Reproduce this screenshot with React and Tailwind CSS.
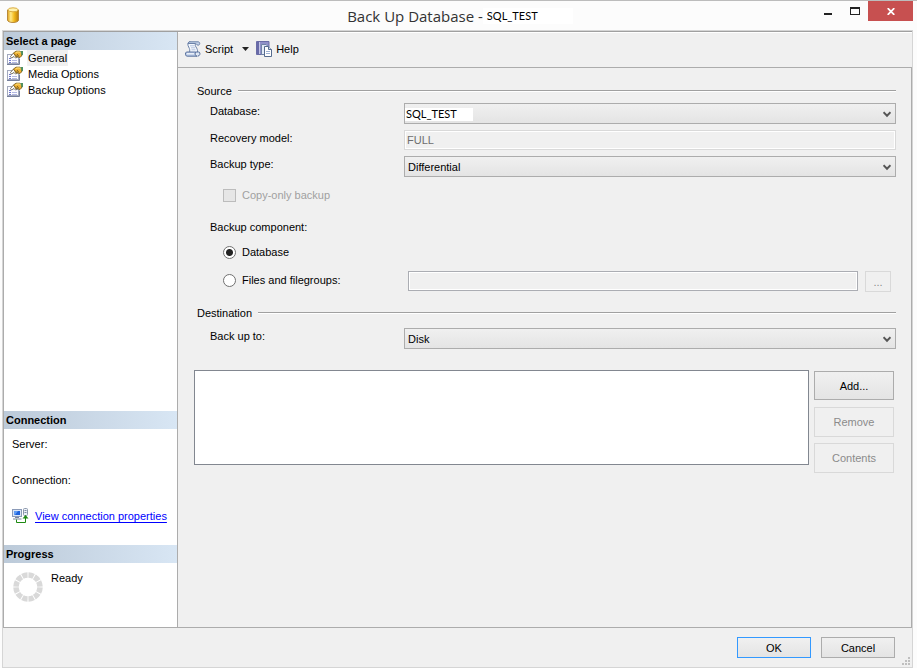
import React, { useState } from "react";

const DatabaseIcon = () => (
  <svg width="12" height="16" viewBox="0 0 12 16" aria-hidden="true">
    <defs>
      <linearGradient id="gold" x1="0" x2="1" y1="0" y2="0">
        <stop offset="0" stopColor="#e0a21c" />
        <stop offset="0.3" stopColor="#ffe98a" />
        <stop offset="0.6" stopColor="#f3bb1d" />
        <stop offset="1" stopColor="#b87a0c" />
      </linearGradient>
    </defs>
    <path d="M.5 3v10c0 1.500 2.500 2.500 5.500 2.500s5.500-1 5.500-2.500V3z" fill="url(#gold)" stroke="#b98a3a" />
    <ellipse cx="6" cy="2.800" rx="5" ry="2" fill="#fff3b0" stroke="#d9ab3f" />
  </svg>
);

const PageIcon = () => (
  <svg width="16" height="16" viewBox="0 0 16 16" aria-hidden="true">
    <rect x="0.500" y="4.500" width="11" height="9" fill="#fbfbff" stroke="#a3a9bd" />
    <path d="M0 14.500h12.500V8.500" stroke="#76809c" fill="none" />
    <path d="M2 8.500h2M2 10.500h2M2 12.500h2" stroke="#6f78cc" />
    <path d="M5 10.500h5M5 12.500h5" stroke="#b3b8e2" />
    <path d="M3.500 6.500 6.500 3l2.500.5L11 7 8.500 8 7 6.500 4.500 8z" fill="#fff" stroke="#6b6350" strokeWidth="0.900" />
    <path d="M6.500 3 9 1.200h4l1.500 2v3L12 7.800 10.500 6 9 7z" fill="#f0b130" stroke="#86661f" strokeWidth="0.900" />
    <path d="m8.500 3 1.500-1h2.800l.8 1.200" stroke="#ffe07a" fill="none" />
    <path d="m8 4.500 2 2M10 4l2 2.500" stroke="#5f4a1a" strokeWidth="0.800" />
    <path d="M13.500 1H16v4.500l-1.500-.7z" fill="#4f9161" />
  </svg>
);

const ScriptIcon = () => (
  <svg width="16" height="16" viewBox="0 0 16 16" aria-hidden="true">
    <path d="M4.500.8c-2 .8-2 3.200-.8 5.200C4.800 8 5 9.500 4.500 11.500h8c.3-2.500-.5-4-1.500-5.500-.8-1.200-1-2.200-.3-3z" fill="#f4f8fd" stroke="#6c82a8" />
    <path d="M4 .8h9c2.300 0 2.300 3.400 0 3.400-1.500 0-1.200-1.700-2.500-1.700H3z" fill="#c4d3ea" stroke="#6c82a8" />
    <path d="M5 4.800h4.500M6 6.800h4M6.500 8.800h4" stroke="#b4c4de" />
    <path d="M1.800 11h9c-1.200 1.500-.3 4.200 1.200 4.200H2.200c-2.300 0-2.300-4.200-.4-4.200z" fill="#b9cae6" stroke="#5a719c" />
    <path d="M10.800 11h3c1.800 0 1.600 4.200-1.300 4.200" fill="#dde7f5" stroke="#5a719c" />
    <path d="M2 12.800h7" stroke="#fff" />
  </svg>
);

const HelpIcon = () => (
  <svg width="16" height="16" viewBox="0 0 16 16" aria-hidden="true">
    <path d="M.5.500h12.500v13H.5z" fill="#8f90c8" stroke="#6a6ca6" />
    <path d="M1 1h2v12H1z" fill="#686aa8" />
    <path d="M3.500 1v12" stroke="#c3c4e6" />
    <path d="M5.500 3.500h4.500l2 2v8H5.500z" fill="#e4ebf7" stroke="#7083a5" />
    <path d="M8.500 5.500h4l3 3v7h-7z" fill="#fff" stroke="#556b8e" />
    <path d="M12.500 5.500v3h3" fill="#cfdcf0" stroke="#556b8e" />
    <path d="M10 10.500h4M10 12.500h4" stroke="#9db1d2" />
  </svg>
);

const ConnectionIcon = () => (
  <svg width="17" height="16" viewBox="0 0 17 16" aria-hidden="true">
    <rect x="0.500" y="1.500" width="9" height="7" fill="#dce6f5" stroke="#8b9bb8" />
    <rect x="2" y="3" width="6" height="4" fill="#1f63dc" />
    <path d="M2 3h4L3 7H2z" fill="#5f9cf5" />
    <path d="M3 9.500h4M1 11h8.500" stroke="#7a879f" />
    <rect x="11.500" y="0.500" width="4" height="7" rx="1" fill="#eef2f8" stroke="#8d99ad" />
    <path d="M12.500 2.500h2M12.500 4.500h2" stroke="#7c8aa6" />
    <path d="M4.500 11.500v3h9V9" stroke="#1e8a12" fill="none" />
    <path d="m10.500 10.500 3-3.500 3 3.500z" fill="#1e8a12" />
  </svg>
);

const ProgressRing = () => (
  <svg width="30" height="30" viewBox="0 0 30 30" aria-hidden="true">
    <circle cx="15" cy="15" r="12" fill="none" stroke="#d9d9d9" strokeWidth="5.500" pathLength="120" strokeDasharray="8.500 1.500" strokeDashoffset="-0.750" />
  </svg>
);

const SectionHeader = ({ children }) => (
  <h2 className="h-[18px] shrink-0 bg-linear-to-r from-[#bccad9] to-[#d8e6f4] pl-0.5 leading-[18px] font-bold">
    {children}
  </h2>
);

const Group = ({ title }) => (
  <div className="flex items-center gap-1.5 pl-[3px]">
    <h3>{title}</h3>
    <div className="h-0.5 flex-1 border-t border-[#a0a0a0] bg-white" />
  </div>
);

const SelectField = ({ id, label, options, patched }) => (
  <div className="flex items-start pl-4">
    <label htmlFor={id} className="w-[194px] shrink-0">{label}</label>
    <div className="relative flex-1">
      <select
        id={id}
        className={
          patched
            ? "block h-[21px] w-full appearance-none border border-[#acacac] bg-[linear-gradient(#fff,#fff),linear-gradient(#f0f0f0,#e4e4e4)] bg-[length:68px_13px,100%_100%] bg-[position:0_4px,0_0] bg-no-repeat pl-px font-[Lato,sans-serif] text-black"
            : "block h-[21px] w-full appearance-none border border-[#acacac] bg-linear-to-b from-[#f0f0f0] to-[#e4e4e4] pl-[3px] text-black"
        }
      >
        {options.map((option) => (
          <option key={option}>{option}</option>
        ))}
      </select>
      <svg className="pointer-events-none absolute top-2 right-[5px]" width="8" height="7" viewBox="0 0 8 7" aria-hidden="true">
        <path d="M.5 1.200 4 4.800l3.500-3.600" fill="none" stroke="#555" strokeWidth="2" />
      </svg>
    </div>
  </div>
);

const buttonStyle = "border border-[#acacac] bg-linear-to-b from-[#f0f0f0] to-[#e4e4e4] disabled:border-[#d9d9d9] disabled:bg-none disabled:text-[#8b8b8b]";
const radioStyle =
  "size-[13px] appearance-none rounded-full border border-[#707070] bg-white checked:bg-[radial-gradient(circle,#222_0_3px,#fff_4px)]";

const App = () => {
  const [component, setComponent] = useState("database");

  return (
    <div className="flex min-h-screen flex-col border-t border-[#bcbcbc] bg-[#fcfcfc] pr-1 font-['Liberation_Sans',Arial,sans-serif] text-[11px] leading-4 text-black">
      {/* Title bar */}
      <header className="flex h-[29px] items-start">
        <div className="flex flex-1 items-center pt-1.5 pl-[7px]">
          <DatabaseIcon />
        </div>
        <h1 className="flex h-[29px] items-center font-['Open_Sans',sans-serif] text-[15px] text-[#333]">
          Back Up Database -
          <span className="w-[90px] bg-white pl-1 font-[Lato,sans-serif] text-[11px] text-black">SQL_TEST</span>
        </h1>
        <div className="flex flex-1 justify-end">
          <button aria-label="Minimize" className="flex h-5 w-[26px] items-start justify-center pt-3">
            <span className="h-0.5 w-2 bg-[#222]" />
          </button>
          <button aria-label="Maximize" className="flex h-5 w-[27px] items-start justify-center pt-1.5">
            <span className="h-2 w-2.5 border border-t-2 border-[#222]" />
          </button>
          <button aria-label="Close" className="flex h-5 w-[45px] items-center justify-center bg-[#c75050]">
            <svg width="8" height="7" viewBox="0 0 8 7" aria-hidden="true">
              <path d="m.7.200 6.600 6.600M7.300.200.7 6.800" stroke="#fff" strokeWidth="1.800" />
            </svg>
          </button>
        </div>
      </header>

      <div className="ml-0.5 flex flex-1 flex-col border border-[#d5d5d5] bg-[#f0f0f0]">
        <div className="flex flex-1 border-y border-t-[#a0a0a0] border-b-[#acacac]">
          <aside className="flex w-[175px] shrink-0 flex-col border-x border-[#acacac] bg-white">
            <SectionHeader>Select a page</SectionHeader>
            <nav className="flex flex-col">
              {["General", "Media Options", "Backup Options"].map((page) => (
                <a key={page} href="#" className="flex h-4 items-center gap-1 pl-[3px]">
                  <PageIcon />
                  <span className={page === "General" ? "bg-[#f0f0f0] px-px" : "px-px"}>{page}</span>
                </a>
              ))}
            </nav>

            <div className="mt-auto flex flex-col">
              <SectionHeader>Connection</SectionHeader>
              <p className="mt-[7px] pl-2">Server:</p>
              <p className="mt-5 pl-2">Connection:</p>
              <a href="#" className="mt-5 flex items-center gap-1.5 pl-2 text-[#0000ff]">
                <ConnectionIcon />
                <span className="whitespace-nowrap underline underline-offset-2">View connection properties</span>
              </a>
            </div>

            <div className="mt-[21px] flex h-[82px] flex-col">
              <SectionHeader>Progress</SectionHeader>
              <div className="flex items-start gap-2 pt-[7px] pl-[9px]">
                <div className="pt-0.5">
                  <ProgressRing />
                </div>
                <p>Ready</p>
              </div>
            </div>
          </aside>

          <main className="flex flex-1 flex-col">
            <div className="flex h-9 items-center border-t border-b border-t-white border-b-[#acacac] pb-[3px] pl-[7px]">
              <button className="flex items-center gap-1">
                <ScriptIcon />
                Script
              </button>
              <button aria-label="Script options" className="ml-2 flex w-[9px] justify-center">
                <svg width="7" height="4" viewBox="0 0 7 4" aria-hidden="true">
                  <path d="M0 0h7L3.500 4z" fill="#222" />
                </svg>
              </button>
              <button className="ml-1.5 flex items-center gap-1">
                <HelpIcon />
                Help
              </button>
            </div>

            <form className="flex flex-1 flex-col border-r border-[#acacac] pt-[15px] pr-[15px] pl-4">
              <Group title="Source" />
              <div className="mt-1 flex flex-col gap-1.5">
                <SelectField id="database" label="Database:" options={["SQL_TEST"]} patched />
                <div className="flex items-start pl-4">
                  <label htmlFor="recovery" className="w-[194px] shrink-0">Recovery model:</label>
                  <input
                    id="recovery"
                    value="FULL"
                    disabled
                    readOnly
                    className="h-5 min-w-0 flex-1 border border-[#d9d9d9] pl-0.5 text-[#6d6d6d] inset-ring inset-ring-white"
                  />
                </div>
                <SelectField id="type" label="Backup type:" options={["Differential", "Full", "Transaction Log"]} />
              </div>
              <label className="mt-2.5 flex items-center gap-1.5 pl-[29px] text-[#a0a0a0]">
                <input type="checkbox" disabled className="size-[13px] appearance-none border border-[#bcbcbc] bg-[#e6e6e6]" />
                Copy-only backup
              </label>

              <p className="mt-4 pl-4">Backup component:</p>
              <label className="mt-[9px] flex items-center gap-1.5 pl-[29px]">
                <input
                  type="radio"
                  name="component"
                  checked={component === "database"}
                  onChange={() => setComponent("database")}
                  className={radioStyle}
                />
                Database
              </label>
              <div className="mt-[11px] flex items-start pr-[5px]">
                <label className="flex w-[214px] shrink-0 items-center gap-1.5 pt-px pl-[29px]">
                  <input
                    type="radio"
                    name="component"
                    checked={component === "files"}
                    onChange={() => setComponent("files")}
                    className={radioStyle}
                  />
                  Files and filegroups:
                </label>
                <input
                  aria-label="Files and filegroups"
                  disabled
                  className="h-5 min-w-0 flex-1 border border-[#abadb3] inset-ring inset-ring-white"
                />
                <button type="button" disabled className={`ml-[7px] h-[21px] w-[26px] ${buttonStyle}`}>
                  ...
                </button>
              </div>

              <div className="mt-[13px] flex flex-col gap-[7px]">
                <Group title="Destination" />
                <SelectField id="target" label="Back up to:" options={["Disk", "Tape"]} />
              </div>

              <div className="mt-[21px] flex gap-[5px] pr-0.5">
                <div role="listbox" aria-label="Backup destinations" className="h-[95px] flex-1 border border-[#828790] bg-white" />
                <div className="flex w-20 flex-col gap-1.5 pt-px">
                  <button type="button" className={`h-[29px] ${buttonStyle}`}>Add...</button>
                  <button type="button" disabled className={`mt-px h-[30px] ${buttonStyle}`}>Remove</button>
                  <button type="button" disabled className={`h-[30px] ${buttonStyle}`}>Contents</button>
                </div>
              </div>
            </form>
          </main>
        </div>

        <footer className="relative flex h-[39px] items-start justify-end gap-2.5 pt-[9px] pr-[17px]">
          <button className="h-[21px] w-[74px] border border-[#3399ff] bg-linear-to-b from-[#f0f0f0] to-[#e4e4e4]">OK</button>
          <button className={`h-[21px] w-[74px] ${buttonStyle}`}>Cancel</button>
          <svg className="absolute right-0.5 bottom-0.5" width="8" height="8" viewBox="0 0 8 8" fill="#bfbfbf" aria-hidden="true">
            <path d="M6 0h2v2H6zM3 3h2v2H3zM6 3h2v2H6zM0 6h2v2H0zM3 6h2v2H3zM6 6h2v2H6z" />
          </svg>
        </footer>
      </div>
    </div>
  );
};

export default App;
